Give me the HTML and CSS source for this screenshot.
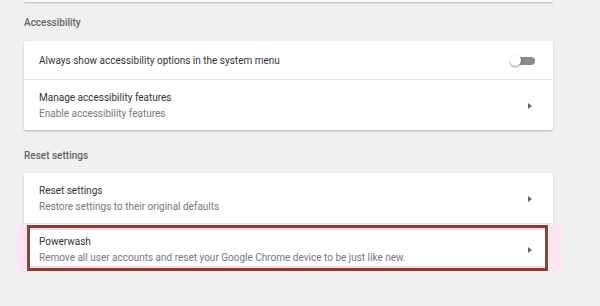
FILE: index.html
```html
<!DOCTYPE html>
<html lang="en">
<head>
    <meta charset="UTF-8">
    <meta name="viewport" content="width=device-width, initial-scale=1.0">
    <title>Settings</title>
    <link rel="stylesheet" href="styles.css">
</head>
<body>
    <div class="page">
        <div class="card card-end"></div>

        <h2 class="section-title first">Accessibility</h2>
        <div class="card">
            <div class="row row-single">
                <p class="label">Always show accessibility options in the system menu</p>
                <div class="toggle"><span class="knob"></span></div>
            </div>
            <div class="row">
                <div>
                    <p class="label">Manage accessibility features</p>
                    <p class="sub">Enable accessibility features</p>
                </div>
                <span class="arrow"></span>
            </div>
        </div>

        <h2 class="section-title">Reset settings</h2>
        <div class="card">
            <div class="row">
                <div>
                    <p class="label">Reset settings</p>
                    <p class="sub">Restore settings to their original defaults</p>
                </div>
                <span class="arrow"></span>
            </div>
            <div class="row row-last highlighted">
                <div>
                    <p class="label">Powerwash</p>
                    <p class="sub">Remove all user accounts and reset your Google Chrome device to be just like new.</p>
                </div>
                <span class="arrow"></span>
                <div class="outline"></div>
            </div>
        </div>
    </div>
</body>
</html>
```

FILE: styles.css
```css
* {
    margin: 0;
    padding: 0;
    box-sizing: border-box;
}

body {
    background: #f0f0f0;
    font-family: Roboto, "Liberation Sans", sans-serif;
    font-size: 10px;
    color: #333;
}

.page {
    width: 529px;
    margin-left: 24px;
}

.card {
    background: #fff;
    box-shadow: 0 1px 2px rgba(0, 0, 0, 0.25);
    border-radius: 2px;
}

.card-end {
    height: 2px;
    background: #f7f7f7;
}

.section-title {
    font-size: 10px;
    font-weight: 500;
    color: #646464;
    line-height: 16px;
    padding: 13px 0 10px;
}

.section-title:not(.first) {
    padding-top: 18px;
    padding-bottom: 9px;
}

.row {
    position: relative;
    display: flex;
    align-items: center;
    justify-content: space-between;
    padding: 10px 21px 9px 15px;
    border-top: 1px solid #e9e9e9;
    line-height: 16px;
}

.row:first-child {
    border-top: 0;
}

.row-single {
    height: 38px;
    padding-right: 18px;
}

.row-last {
    padding-bottom: 7px;
}

.label {
    color: #333;
}

.sub {
    color: #777;
    line-height: 15px;
}

.arrow {
    width: 0;
    height: 0;
    border-top: 3px solid transparent;
    border-bottom: 3px solid transparent;
    border-left: 4px solid #666;
}

.toggle {
    position: relative;
    width: 23px;
    height: 8px;
    border-radius: 4px;
    background: #8a8a8a;
}

.knob {
    position: absolute;
    left: -2px;
    top: -2px;
    width: 11px;
    height: 11px;
    border-radius: 50%;
    background: #fff;
    box-shadow: 0 1px 2px rgba(0, 0, 0, 0.45);
}

.highlighted .outline {
    position: absolute;
    left: 3px;
    right: 5px;
    top: 1px;
    bottom: 1px;
    border: 3px solid #933a2c;
    border-left-color: #7d4a33;
    border-right-color: #7d4a33;
    box-shadow: inset 0 2px 0 #fbd3e8, inset 0 -2px 0 #fbd3e8,
        -10px 0 0 #fde3f0, 12px 0 0 #fde3f0;
}
```
